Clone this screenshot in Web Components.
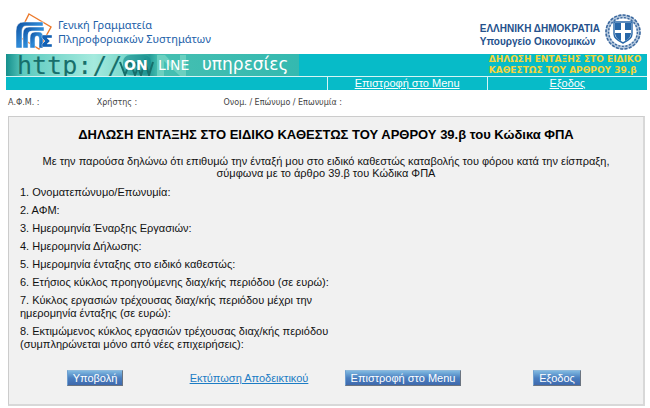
<!DOCTYPE html>
<html lang="el">
<head>
<meta charset="utf-8">
<title>Δήλωση ένταξης στο ειδικό καθεστώς</title>
<style>
	body {
		margin: 0;
		background: #fff;
		color: #111;
		font-family: 'Liberation Sans', Arial, sans-serif;
		font-size: 11px;
	}
</style>
</head>
<body>
<declaration-page></declaration-page>

<script>
class SiteHeader extends HTMLElement {
	constructor() {
		super();
		this.attachShadow({ mode: 'open' });
	}

	connectedCallback() {
		this.shadowRoot.innerHTML = `
            <style>
                :host {
                    display: block;
                }
                header {
                    display: flex;
                    justify-content: space-between;
                    align-items: center;
                    box-sizing: border-box;
                    height: 54px;
                    padding: 9px 8px 0 14px;
                }
                .brand {
                    display: flex;
                    align-items: center;
                    gap: 4px;
                }
                .left {
                    color: #2160a8;
                    font: 11px/14px 'Noto Sans', sans-serif;
                }
                .right {
                    color: #24518c;
                    font: bold 10px/13px 'Liberation Sans', Arial, sans-serif;
                }
                .right div {
                    padding-top: 6px;
                }
                svg {
                    display: block;
                }
            </style>
            <header>
                <div class="brand left">
                    <svg width="40" height="38" viewBox="0 0 40 38" aria-hidden="true">
                        <defs>
                            <linearGradient id="blue" x1="0" y1="0" x2="1" y2="1">
                                <stop offset="0" stop-color="#0c4c9c"/>
                                <stop offset=".5" stop-color="#2f8bd8"/>
                                <stop offset="1" stop-color="#0c58ae"/>
                            </linearGradient>
                        </defs>
                        <path d="M15 1 L37 14 L25 36 L4 23 Z" fill="none" stroke="#ec7a2c" stroke-width="1.4"/>
                        <path d="M2 35 V18 Q2 9 10 9 H29 V13 H12 Q8 13 8 18 V35 Z" fill="url(#blue)" stroke="#fff" stroke-width=".5"/>
                        <path d="M9 35 V21 Q9 14 15 14 H30 V18 H18 Q14 18 14 22 V35 Z" fill="url(#blue)" stroke="#fff" stroke-width=".5"/>
                        <path d="M16 35 V25 Q16 19 21 19 H25 Q29 19 29 24 V35 H25 V26 Q25 23 23 23 Q21 23 21 26 V35 Z" fill="url(#blue)" stroke="#fff" stroke-width=".5"/>
                        <path d="M28 22 H38 V25 H33 L36 28 L33 31 H38 V34 H28 V31 L31 28 L28 25 Z" fill="#1260b4" stroke="#fff" stroke-width=".4"/>
                    </svg>
                    <div>Γενική Γραμματεία<br>Πληροφοριακών Συστημάτων</div>
                </div>
                <div class="brand right">
                    <div>ΕΛΛΗΝΙΚΗ ΔΗΜΟΚΡΑΤΙΑ<br>Υπουργείο Οικονομικών</div>
                    <svg width="38" height="38" viewBox="0 0 38 38" aria-hidden="true">
                        <circle cx="19" cy="19" r="15.6" fill="none" stroke="#b4c8de" stroke-width="4"/>
                        <circle cx="19" cy="19" r="17" fill="none" stroke="#3c689e" stroke-width="1.6" stroke-dasharray="3 1.4"/>
                        <circle cx="19" cy="19" r="14.4" fill="none" stroke="#3c689e" stroke-width="1.4" stroke-dasharray="2 1.6"/>
                        <path d="M10 9 H28 V21 Q28 26 19 30 Q10 26 10 21 Z" fill="#fff" stroke="#2867a8" stroke-width="1.4"/>
                        <path d="M11 10 H17 V17 H11 Z M21 10 H27 V17 H21 Z M11 20 H17 V28 Q11 25 11 20 Z M21 20 H27 Q27 25 21 28 Z" fill="#2867a8"/>
                    </svg>
                </div>
            </header>
        `;
	}
}

class SiteBanner extends HTMLElement {
	constructor() {
		super();
		this.attachShadow({ mode: 'open' });
	}

	connectedCallback() {
		this.shadowRoot.innerHTML = `
            <style>
                :host {
                    display: block;
                    margin: 0 3px 0 6px;
                    background: #07bbc8;
                }
                .top {
                    display: grid;
                    grid-template-columns: 3fr 1fr;
                    height: 22px;
                    border-bottom: 1px solid #d5f5f6;
                }
                .art {
                    display: block;
                }
                .title {
                    padding-left: 2px;
                    color: #f5d43c;
                    font: bold 9px/11px 'DejaVu Sans', Verdana, sans-serif;
                    white-space: nowrap;
                }
                nav {
                    display: grid;
                    grid-template-columns: 2fr 1fr 1fr;
                }
                nav > * {
                    text-align: center;
                    line-height: 13px;
                }
                nav > * + * {
                    border-left: 1px solid #d5f5f6;
                }
                a {
                    color: #fff;
                }
            </style>
            <div class="top">
                <svg class="art" width="293" height="22" viewBox="0 0 293 22">
                    <defs>
                        <linearGradient id="glow">
                            <stop offset="0" stop-color="#148f8c"/>
                            <stop offset=".06" stop-color="#5dcbc0"/>
                            <stop offset=".3" stop-color="#a5eade"/>
                            <stop offset=".42" stop-color="#76d6ca"/>
                            <stop offset=".49" stop-color="#269c98"/>
                            <stop offset=".52" stop-color="#45bfb1"/>
                            <stop offset="1" stop-color="#34b9b0"/>
                        </linearGradient>
                    </defs>
                    <rect width="293" height="22" fill="url(#glow)"/>
                    <rect x="117" y="1" width="28" height="20" rx="7" fill="#158e8d" opacity=".65"/>
                    <path d="M151 22 V1 H159 L174 17 V1 H180 V22 H174 L158 7 V22 Z" fill="#86dcca" opacity=".6"/>
                    <text x="11" y="20" fill="#176f6b" font-family="DejaVu Sans Mono" font-size="25">http://</text>
                    <path d="M114 8 L119 21 L124 8 L129 21 L134 8 M130 8 L135 21 L139 8 L143 21 L147 8" fill="none" stroke="#176f6b" stroke-width="2"/>
                    <g fill="#fff" font-family="DejaVu Sans" font-size="14">
                        <text x="118" y="16" font-weight="bold">ON</text>
                        <text x="152" y="16">LINE</text>
                        <text x="196" y="16" font-size="17">υπηρεσίες</text>
                    </g>
                </svg>
                <div class="title">ΔΗΛΩΣΗ ΕΝΤΑΞΗΣ ΣΤΟ ΕΙΔΙΚΟ<br>ΚΑΘΕΣΤΩΣ ΤΟΥ ΑΡΘΡΟΥ 39.β</div>
            </div>
            <nav>
                <span></span>
                <span><a href="#menu">Επιστροφή στο Menu</a></span>
                <span><a href="#exit">Εξοδος</a></span>
            </nav>
        `;
	}
}

class UserInfo extends HTMLElement {
	constructor() {
		super();
		this.attachShadow({ mode: 'open' });
	}

	connectedCallback() {
		this.shadowRoot.innerHTML = `
            <style>
                :host {
                    display: grid;
                    grid-template-columns: 14% 20% 1fr;
                    padding: 7px 8px 8px;
                    color: #444;
                    font: 8px/11px 'DejaVu Sans', Verdana, sans-serif;
                }
            </style>
            <span>Α.Φ.Μ. :</span>
            <span>Χρήστης :</span>
            <span>Ονομ. / Επώνυμο / Επωνυμία :</span>
        `;
	}
}

class FormButton extends HTMLElement {
	constructor() {
		super();
		this.attachShadow({ mode: 'open' });
	}

	connectedCallback() {
		this.shadowRoot.innerHTML = `
            <style>
                :host {
                    display: inline-block;
                }
                button {
                    display: block;
                    height: 16px;
                    padding: 0 5px;
                    border: 1px solid;
                    border-color: #8fb9dc #6b7480 #6b7480 #6f9fd0;
                    background: linear-gradient(#7fb8e0, #4a7fc0 50%, #3f69ad);
                    color: #fff;
                    font: inherit;
                    line-height: 14px;
                    cursor: pointer;
                }
            </style>
            <button type="button"><slot></slot></button>
        `;
	}
}

class DeclarationForm extends HTMLElement {
	constructor() {
		super();
		this.attachShadow({ mode: 'open' });
	}

	connectedCallback() {
		const fields = [
			'Ονοματεπώνυμο/Επωνυμία:',
			'ΑΦΜ:',
			'Ημερομηνία Έναρξης Εργασιών:',
			'Ημερομηνία Δήλωσης:',
			'Ημερομηνία ένταξης στο ειδικό καθεστώς:',
			'Ετήσιος κύκλος προηγούμενης διαχ/κής περιόδου (σε ευρώ):',
			'Κύκλος εργασιών τρέχουσας διαχ/κής περιόδου μέχρι την<br>ημερομηνία ένταξης (σε ευρώ):',
			'Εκτιμώμενος κύκλος εργασιών τρέχουσας διαχ/κής περιόδου<br>(συμπληρώνεται μόνο από νέες επιχειρήσεις):',
		];

		this.shadowRoot.innerHTML = `
            <style>
                :host {
                    display: block;
                    margin: 0 5px 0 8px;
                    padding: 10px 9px 18px;
                    border: 1px solid #ccc;
                    border-right: 2px solid #d8d8d8;
                    border-bottom: 2px solid #d8d8d8;
                    background: #f1f1f1;
                }
                h1 {
                    margin: 0 0 12px;
                    color: #000;
                    font-size: 13px;
                    line-height: 16px;
                    text-align: center;
                }
                .intro {
                    margin: 0 0 4px;
                    line-height: 12px;
                    text-align: center;
                }
                .field {
                    padding: 3px 2px 2px;
                    line-height: 13px;
                }
                .actions {
                    display: grid;
                    grid-template-columns: repeat(4, 1fr);
                    justify-items: center;
                    align-items: center;
                    margin-top: 17px;
                }
                a {
                    color: #1c7cc4;
                }
            </style>
            <h1>ΔΗΛΩΣΗ ΕΝΤΑΞΗΣ ΣΤΟ ΕΙΔΙΚΟ ΚΑΘΕΣΤΩΣ ΤΟΥ ΑΡΘΡΟΥ 39.β του Κώδικα ΦΠΑ</h1>
            <p class="intro">Με την παρούσα δηλώνω ότι επιθυμώ την ένταξή μου στο ειδικό καθεστώς καταβολής του φόρου κατά την είσπραξη,<br>σύμφωνα με το άρθρο 39.β του Κώδικα ΦΠΑ</p>
            ${fields.map((text, i) => `<div class="field">${i + 1}. ${text}</div>`).join('')}
            <div class="actions">
                <form-button>Υποβολή</form-button>
                <a href="#print">Εκτύπωση Αποδεικτικού</a>
                <form-button>Επιστροφή στο Menu</form-button>
                <form-button>Εξοδος</form-button>
            </div>
        `;
	}
}

class DeclarationPage extends HTMLElement {
	constructor() {
		super();
		this.attachShadow({ mode: 'open' });
	}

	connectedCallback() {
		this.shadowRoot.innerHTML = `
            <style>
                :host {
                    display: block;
                }
            </style>
            <site-header></site-header>
            <site-banner></site-banner>
            <user-info></user-info>
            <declaration-form></declaration-form>
        `;
	}
}

customElements.define('site-header', SiteHeader);
customElements.define('site-banner', SiteBanner);
customElements.define('user-info', UserInfo);
customElements.define('form-button', FormButton);
customElements.define('declaration-form', DeclarationForm);
customElements.define('declaration-page', DeclarationPage);
</script>
</body>
</html>
